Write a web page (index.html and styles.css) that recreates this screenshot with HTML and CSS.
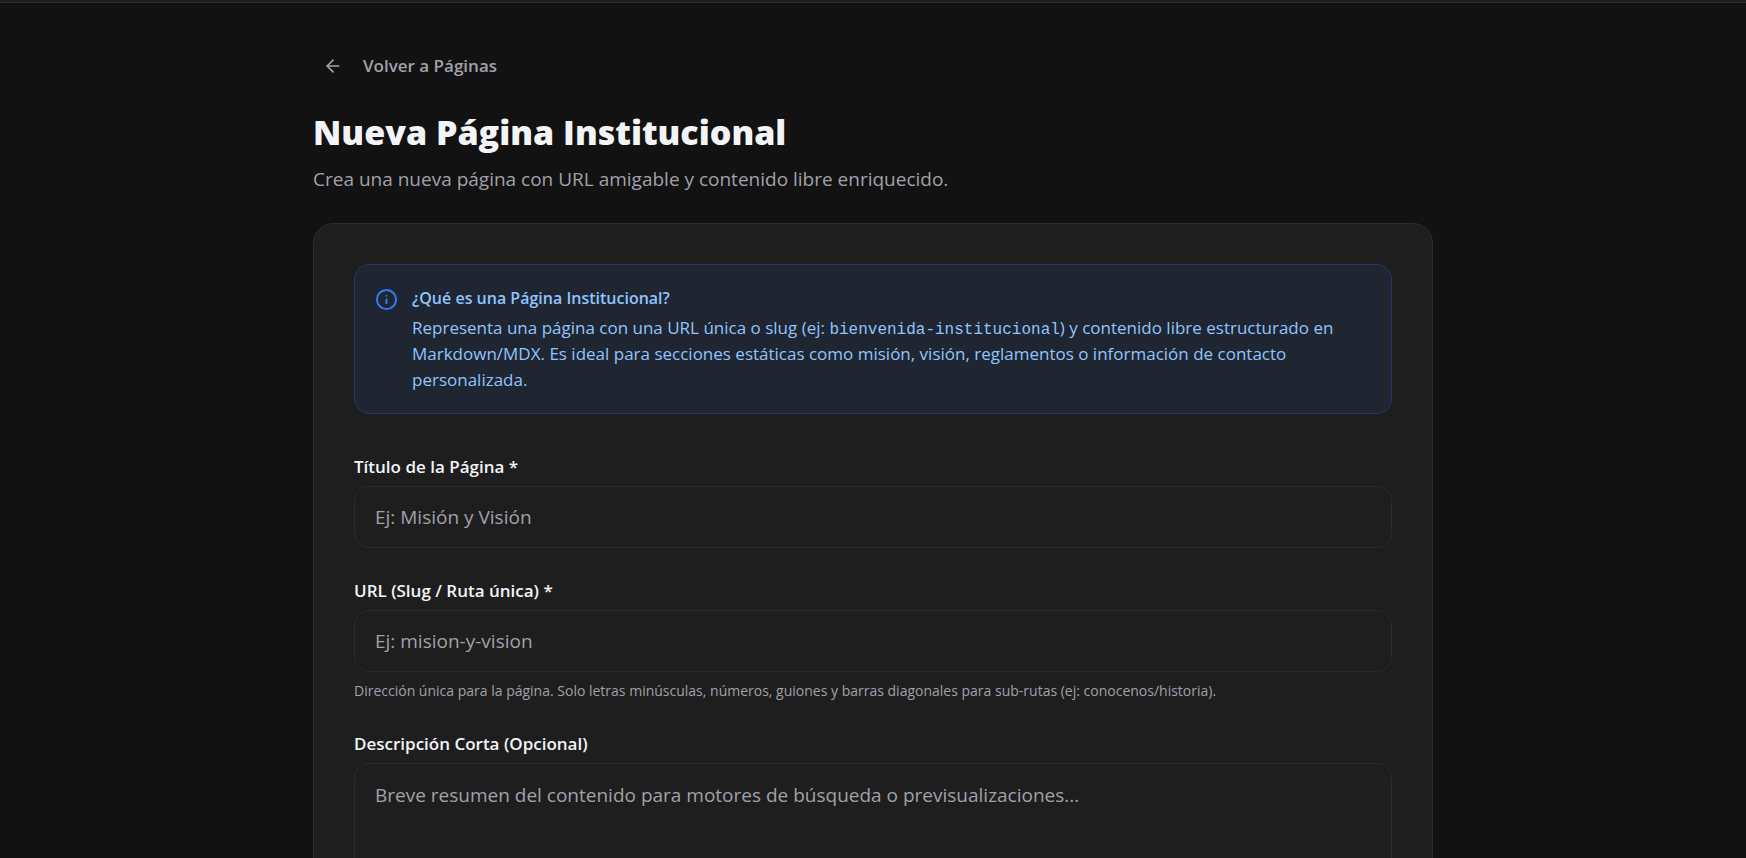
FILE: index.html
```html
<!DOCTYPE html>
<html lang="es">

<head>
  <meta charset="UTF-8" />
  <meta name="viewport" content="width=device-width, initial-scale=1.0" />
  <title>Nueva Página Institucional</title>
  <link rel="stylesheet" href="styles.css">
</head>

<body>
  <header class="topbar"></header>

  <main class="container">
    <a href="#" class="back-link">
      <svg class="back-icon" viewBox="0 0 24 24" aria-hidden="true">
        <path d="M19 12H5" />
        <path d="m12 19-7-7 7-7" />
      </svg>
      Volver a Páginas
    </a>

    <h1 class="title">Nueva Página Institucional</h1>
    <p class="subtitle">Crea una nueva página con URL amigable y contenido libre enriquecido.</p>

    <form class="card">
      <div class="info-box">
        <svg class="info-icon" viewBox="0 0 24 24" aria-hidden="true">
          <circle cx="12" cy="12" r="10" />
          <path d="M12 16v-4" />
          <path d="M12 8h.01" />
        </svg>
        <div class="info-text">
          <h2>¿Qué es una Página Institucional?</h2>
          <p>Representa una página con una URL única o slug (ej: <code>bienvenida-institucional</code>) y contenido libre estructurado en Markdown/MDX. Es ideal para secciones estáticas como misión, visión, reglamentos o información de contacto personalizada.</p>
        </div>
      </div>

      <div class="field">
        <label for="titulo">Título de la Página *</label>
        <input type="text" id="titulo" placeholder="Ej: Misión y Visión" />
      </div>

      <div class="field">
        <label for="slug">URL (Slug / Ruta única) *</label>
        <input type="text" id="slug" placeholder="Ej: mision-y-vision" />
        <p class="hint">Dirección única para la página. Solo letras minúsculas, números, guiones y barras diagonales para sub-rutas (ej: conocenos/historia).</p>
      </div>

      <div class="field">
        <label for="descripcion">Descripción Corta (Opcional)</label>
        <textarea id="descripcion" rows="4" placeholder="Breve resumen del contenido para motores de búsqueda o previsualizaciones..."></textarea>
      </div>
    </form>
  </main>
</body>

</html>
```
FILE: styles.css
```css
* {
  box-sizing: border-box;
}

html {
  scrollbar-width: none;
}

body {
  margin: 0;
  background-color: #121212;
  color: #f3f4f8;
  font-family: "Segoe UI", "Open Sans", sans-serif;
  font-size: 19px;
}

h1,
h2,
p {
  margin: 0;
}

.topbar {
  height: 3px;
  background-color: #1e1e1e;
  border-bottom: 1px solid #2c2c2c;
}

.container {
  max-width: 1120px;
  margin: 0 auto;
  padding: 40px 0;
}

.back-link {
  display: inline-flex;
  align-items: center;
  gap: 20px;
  height: 45px;
  padding: 0 10px;
  color: #a1a1aa;
  font-size: 17px;
  font-weight: 600;
  text-decoration: none;
}

.back-icon {
  width: 20px;
  height: 20px;
  fill: none;
  stroke: currentColor;
  stroke-width: 2;
  stroke-linecap: round;
  stroke-linejoin: round;
}

.title {
  margin-top: 20px;
  font-size: 34px;
  line-height: 48px;
  font-weight: 800;
}

.subtitle {
  margin-top: 9px;
  color: #a1a1aa;
  line-height: 28px;
}

.card {
  margin-top: 30px;
  padding: 40px;
  background-color: #1e1e1e;
  border: 1px solid #2c2c2c;
  border-radius: 20px;
}

.info-box {
  display: flex;
  gap: 14px;
  margin-bottom: 40px;
  padding: 20px;
  background-color: #202631;
  border: 1px solid #1f3a66;
  border-radius: 15px;
  color: #8ec5ff;
}

.info-icon {
  flex-shrink: 0;
  width: 23px;
  height: 23px;
  margin-top: 3px;
  fill: none;
  stroke: #2b7fff;
  stroke-width: 2;
  stroke-linecap: round;
  stroke-linejoin: round;
}

.info-text h2 {
  margin-bottom: 4px;
  font-size: 16px;
  line-height: 26px;
  font-weight: 600;
}

.info-text p {
  font-size: 17px;
  line-height: 26px;
}

.info-text code {
  font-family: Consolas, "Liberation Mono", monospace;
  font-size: 16px;
  line-height: 1;
}

.field {
  margin-bottom: 30px;
}

.field label {
  display: block;
  margin-bottom: 7px;
  font-size: 17px;
  line-height: 25px;
  font-weight: 600;
}

.field input,
.field textarea {
  display: block;
  width: 100%;
  padding: 16px 20px;
  background-color: transparent;
  border: 1px solid #2a2a2a;
  border-radius: 15px;
  color: inherit;
  font: inherit;
  line-height: 30px;
  resize: none;
}

.field input {
  height: 62px;
}

.field ::placeholder {
  color: #a1a1aa;
  opacity: 1;
}

.hint {
  margin-top: 9px;
  color: #a1a1aa;
  font-size: 14px;
  line-height: 20px;
}
```
